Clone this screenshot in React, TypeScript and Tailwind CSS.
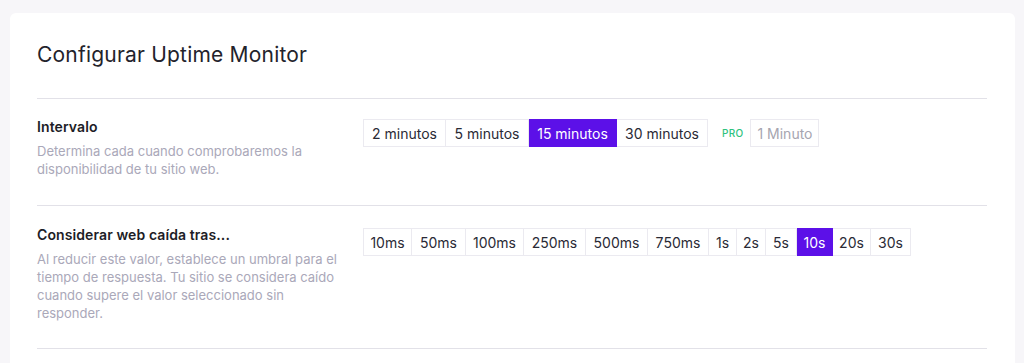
import React from 'react';

const font = { fontFamily: '"Inter", "Noto Sans", sans-serif' };

type Opt = { label: string; w: string; active?: boolean };

const intervals: Opt[] = [
  { label: '2 minutos', w: 'w-[83px]' },
  { label: '5 minutos', w: 'w-[83px]' },
  { label: '15 minutos', w: 'w-[88px]', active: true },
  { label: '30 minutos', w: 'w-[91px]' },
];

const timeouts: Opt[] = [
  { label: '10ms', w: 'w-[49px]' },
  { label: '50ms', w: 'w-[54px]' },
  { label: '100ms', w: 'w-[58px]' },
  { label: '250ms', w: 'w-[62px]' },
  { label: '500ms', w: 'w-[62px]' },
  { label: '750ms', w: 'w-[61px]' },
  { label: '1s', w: 'w-[28px]' },
  { label: '2s', w: 'w-[29px]' },
  { label: '5s', w: 'w-[31px]' },
  { label: '10s', w: 'w-[36px]', active: true },
  { label: '20s', w: 'w-[38px]' },
  { label: '30s', w: 'w-[40px]' },
];

const OptionGroup: React.FC<{ options: Opt[] }> = ({ options }) => (
  <div className="flex">
    {options.map((o, i) => (
      <div
        key={i}
        className={`${o.w} h-[28px] flex items-center justify-center text-[14px] border-y border-r first:border-l ${
          o.active
            ? 'bg-[#5c10e8] border-[#5c10e8] text-white'
            : 'bg-white border-[#ebeaf0] text-[#2a2a35]'
        }`}
      >
        {o.label}
      </div>
    ))}
  </div>
);

export default function App() {
  return (
    <div className="min-h-[363px] bg-[#f7f6f9] pt-[13px] px-[10px] pr-[9px]" style={font}>
      <div className="bg-white rounded-t-[6px] px-[27px] pr-[28px] pb-[20px]">
        <h1 className="text-[21px] text-[#23232b] pt-[28px] pb-[29px] leading-[28px] tracking-[0.2px]">
          Configurar Uptime Monitor
        </h1>

        {/* Intervalo */}
        <div className="border-t border-[#e2e1e8] pt-[18px] pb-[27px] flex">
          <div className="w-[326px]">
            <div className="text-[14px] font-semibold text-[#1d1d26] leading-[20px] tracking-[0.1px]">Intervalo</div>
            <p className="text-[13px] text-[#aaa8b9] leading-[18px] mt-[5px] pr-[20px]">
              Determina cada cuando comprobaremos la disponibilidad de tu sitio web.
            </p>
          </div>
          <div className="flex items-center h-[28px] mt-[2px]">
            <OptionGroup options={intervals} />
            <span className="ml-[14px] text-[10px] font-medium text-[#2ec27e] tracking-[0.3px]">PRO</span>
            <div className="ml-[7px] w-[69px] h-[28px] flex items-center justify-center text-[14px] border border-[#ebeaf0] text-[#a6a5b0]">
              1 Minuto
            </div>
          </div>
        </div>

        {/* Considerar web caida */}
        <div className="border-t border-[#e2e1e8] pt-[19px] pb-[26px] flex">
          <div className="w-[326px]">
            <div className="text-[14px] font-semibold text-[#1d1d26] leading-[20px] tracking-[0.1px]">Considerar web caída tras...</div>
            <p className="text-[13px] text-[#aaa8b9] leading-[18px] mt-[5px] pr-[12px]">
              Al reducir este valor, establece un umbral para el tiempo de respuesta. Tu sitio se considera caído cuando supere el valor seleccionado sin responder.
            </p>
          </div>
          <div className="mt-[3px]">
            <OptionGroup options={timeouts} />
          </div>
        </div>

        <div className="border-t border-[#e2e1e8]" />
      </div>
    </div>
  );
}
